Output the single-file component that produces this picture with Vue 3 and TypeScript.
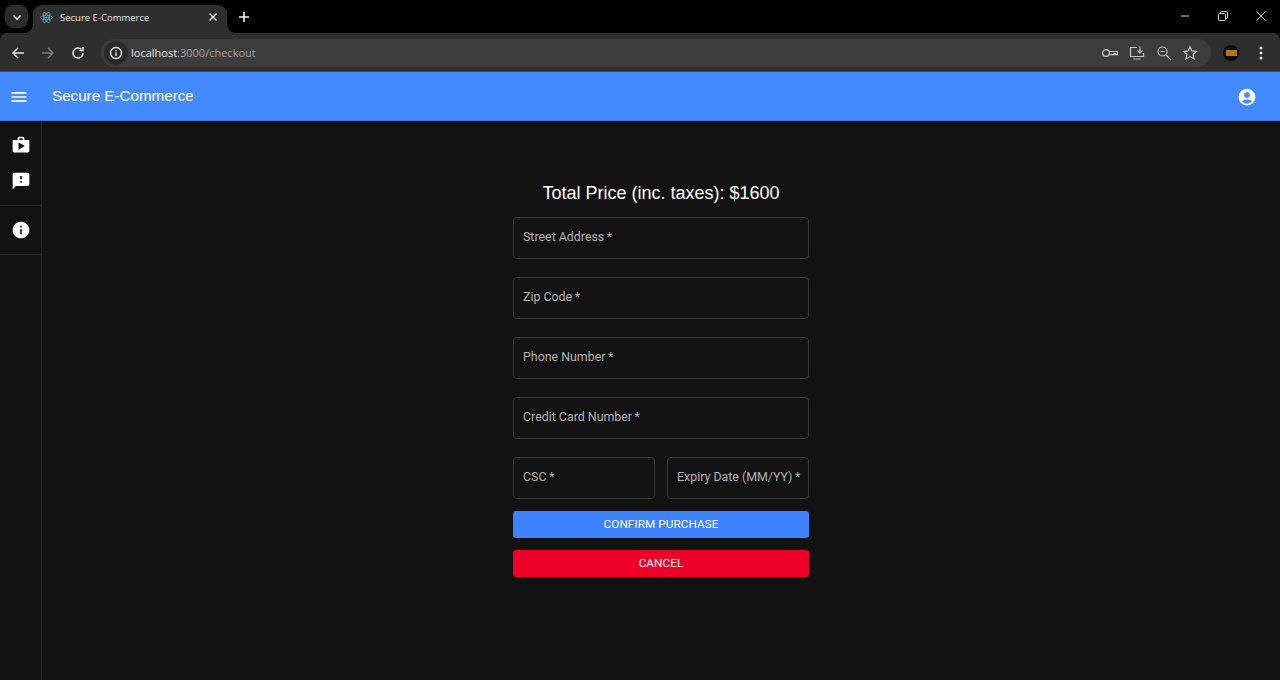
<script setup lang="ts">
const paths = {
  shop: 'M16 6V4c0-1.11-.89-2-2-2h-4c-1.11 0-2 .89-2 2v2H2v13c0 1.11.89 2 2 2h16c1.11 0 2-.89 2-2V6h-6zm-6-2h4v2h-4V4zM9 18V9l7.5 4L9 18z',
  feedback: 'M20 2H4c-1.1 0-1.99.9-1.99 2L2 22l4-4h14c1.1 0 2-.9 2-2V4c0-1.1-.9-2-2-2zm-7 12h-2v-2h2v2zm0-4h-2V6h2v4z',
  info: 'M12 2C6.48 2 2 6.48 2 12s4.48 10 10 10 10-4.48 10-10S17.52 2 12 2zm1 15h-2v-6h2v6zm0-8h-2V7h2v2z',
  account: 'M12 2C6.48 2 2 6.48 2 12s4.48 10 10 10 10-4.48 10-10S17.52 2 12 2zm0 4c1.93 0 3.5 1.57 3.5 3.5S13.93 13 12 13s-3.5-1.57-3.5-3.5S10.07 6 12 6zm0 14c-2.03 0-4.43-.82-6.14-2.88C7.55 15.8 9.68 15 12 15s4.45.8 6.14 2.12C16.43 19.18 14.03 20 12 20z',
  menu: 'M3 18h18v-2H3v2zm0-5h18v-2H3v2zm0-7v2h18V6H3z',
}
const fields: string[] = ['Street Address', 'Zip Code', 'Phone Number', 'Credit Card Number']
</script>

<template>
  <div class="page">
    <div class="tabstrip">
      <div class="tabsearch">
        <svg width="10" height="10" viewBox="0 0 10 10"><path d="M1.5 3.5 5 7l3.5-3.5" fill="none" stroke="#e8eaed" stroke-width="1.6" /></svg>
      </div>
      <div class="tab">
        <svg class="favicon" width="13" height="13" viewBox="-12 -12 24 24" fill="none" stroke="#58c4dc" stroke-width="1.2">
          <ellipse rx="10.5" ry="4.2" />
          <ellipse rx="10.5" ry="4.2" transform="rotate(60)" />
          <ellipse rx="10.5" ry="4.2" transform="rotate(120)" />
          <circle r="2" fill="#58c4dc" stroke="none" />
        </svg>
        <span class="tabtitle">Secure E-Commerce</span>
        <svg class="tabclose" width="10" height="10" viewBox="0 0 10 10"><path d="M1.5 1.5l7 7m0-7-7 7" stroke="#f1f3f4" stroke-width="1.4" /></svg>
      </div>
      <svg class="newtab" width="12" height="12" viewBox="0 0 12 12"><path d="M6 1v10M1 6h10" stroke="#f1f3f4" stroke-width="1.6" /></svg>
      <div class="winctrls">
        <svg width="12" height="12" viewBox="0 0 12 12"><path d="M2 6h8" stroke="#d5d5d5" stroke-width="1" /></svg>
        <svg width="12" height="12" viewBox="0 0 12 12" fill="none" stroke="#d5d5d5"><rect x="1.5" y="3.5" width="7" height="7" rx="1" /><path d="M3.5 3.5V2.5a1 1 0 0 1 1-1h5a1 1 0 0 1 1 1v5a1 1 0 0 1-1 1h-1" /></svg>
        <svg width="12" height="12" viewBox="0 0 12 12"><path d="M1.5 1.5l9 9m0-9-9 9" stroke="#d5d5d5" stroke-width="1" /></svg>
      </div>
    </div>

    <div class="toolbar">
      <svg class="tool" width="14" height="14" viewBox="0 0 14 14" fill="none" stroke="#e3e3e3" stroke-width="1.5"><path d="M13 7H2M7 2 2 7l5 5" /></svg>
      <svg class="tool" width="14" height="14" viewBox="0 0 14 14" fill="none" stroke="#7b7b7b" stroke-width="1.5"><path d="M1 7h11M7 2l5 5-5 5" /></svg>
      <svg class="tool" width="14" height="14" viewBox="0 0 14 14" fill="none" stroke="#e3e3e3" stroke-width="1.5"><path d="M12 7a5 5 0 1 1-1.6-3.7M12 1v3.5H8.5" /></svg>
      <div class="omnibox">
        <div class="siteinfo">
          <svg width="14" height="14" viewBox="0 0 14 14" fill="none" stroke="#e3e3e3" stroke-width="1.4"><circle cx="7" cy="7" r="5.5" /><path d="M7 6.2V10M7 4v1.3" /></svg>
        </div>
        <span class="url"><span class="host">localhost</span><span class="rest">:3000/checkout</span></span>
        <div class="omniicons">
          <svg class="keyicon" width="16" height="16" viewBox="0 0 16 16" fill="none" stroke="#c7c7c7" stroke-width="1.2"><circle cx="4" cy="8" r="3.4" /><path d="M7.4 6.5h8v3.2h-2V8.6h-1.4v1.1H7.4" /></svg>
          <svg width="16" height="16" viewBox="0 0 16 16" fill="none" stroke="#c7c7c7" stroke-width="1.2"><path d="M8 2.5H1.5v9h13V8M4.5 14h7M11 1.5v6M8.5 5.5 11 8l2.5-2.5" /></svg>
          <svg width="16" height="16" viewBox="0 0 16 16" fill="none" stroke="#c7c7c7" stroke-width="1.2"><circle cx="6.5" cy="6.5" r="4.5" /><path d="m10 10 5 5M4.5 6.5h4" /></svg>
          <svg width="16" height="16" viewBox="0 0 16 16" fill="none" stroke="#c7c7c7" stroke-width="1.2"><path d="m8 1.8 1.9 4.1 4.5.5-3.3 3 .9 4.5L8 11.6l-4 2.3.9-4.5-3.3-3 4.5-.5z" /></svg>
        </div>
      </div>
      <div class="avatar"><span class="avatarbar"></span></div>
      <svg class="kebab" width="4" height="14" viewBox="0 0 4 14" fill="#e3e3e3"><circle cx="2" cy="2" r="1.5" /><circle cx="2" cy="7" r="1.5" /><circle cx="2" cy="12" r="1.5" /></svg>
    </div>

    <header class="appbar">
      <svg class="menuicon" width="20" height="20" viewBox="0 0 24 24" fill="#fff"><path :d="paths.menu" /></svg>
      <h1 class="brand">Secure E-Commerce</h1>
      <svg width="20" height="20" viewBox="0 0 24 24" fill="#fff"><path :d="paths.account" /></svg>
    </header>

    <div class="body">
      <aside class="sidebar">
        <div class="navgroup">
          <div class="navitem"><svg width="20" height="20" viewBox="0 0 24 24" fill="#fff"><path :d="paths.shop" /></svg></div>
          <div class="navitem"><svg width="20" height="20" viewBox="0 0 24 24" fill="#fff"><path :d="paths.feedback" /></svg></div>
        </div>
        <div class="navgroup">
          <div class="navitem"><svg width="20" height="20" viewBox="0 0 24 24" fill="#fff"><path :d="paths.info" /></svg></div>
        </div>
      </aside>

      <main class="main">
        <form class="form" @submit.prevent>
          <h2 class="total">Total Price (inc. taxes): $1600</h2>
          <div v-for="f in fields" :key="f" class="field">{{ f }}&thinsp;*</div>
          <div class="split">
            <div class="field">CSC&thinsp;*</div>
            <div class="field">Expiry Date (MM/YY)&thinsp;*</div>
          </div>
          <button class="btn confirm" type="button">Confirm Purchase</button>
          <button class="btn cancel" type="button">Cancel</button>
        </form>
      </main>
    </div>
  </div>
</template>

<style scoped>
.page {
  width: 1280px;
  height: 680px;
  overflow: hidden;
  display: flex;
  flex-direction: column;
  background: #121212;
  font-family: "Liberation Sans", Arial, sans-serif;
}
.tabstrip {
  height: 33px;
  background: #000;
  display: flex;
  align-items: flex-start;
  padding-left: 5px;
  flex: none;
}
.tabsearch {
  width: 23px;
  height: 23px;
  margin-top: 5px;
  border-radius: 8px;
  background: #2b2b2b;
  display: flex;
  align-items: center;
  justify-content: center;
}
.tab {
  position: relative;
  z-index: 1;
  width: 194px;
  height: 28px;
  margin: 5px 0 0 5px;
  background: #2e2e2e;
  border-radius: 9px 9px 0 0;
  display: flex;
  align-items: center;
  padding: 0 9px 4px 7px;
  box-sizing: border-box;
}
.tab::before,
.tab::after {
  content: "";
  position: absolute;
  bottom: 0;
  width: 8px;
  height: 8px;
}
.tab::before {
  left: -8px;
  background: radial-gradient(circle at 0 0, transparent 7.5px, #2e2e2e 8px);
}
.tab::after {
  right: -8px;
  background: radial-gradient(circle at 100% 0, transparent 7.5px, #2e2e2e 8px);
}
.favicon { flex: none; }
.tabtitle {
  flex: 1;
  margin-left: 7px;
  font-size: 9.5px;
  color: #e3e3e3;
  font-family: "Open Sans", sans-serif;
  white-space: nowrap;
}
.newtab { margin: 11px 0 0 11px; }
.winctrls {
  margin-left: auto;
  display: flex;
  gap: 26px;
  padding: 10px 13px 0 0;
  justify-content: flex-end;
}
.toolbar {
  height: 39px;
  padding-top: 1px;
  box-sizing: border-box;
  background: #2e2e2e;
  border-radius: 8px 8px 0 0;
  display: flex;
  align-items: center;
  padding-left: 11px;
  border-bottom: 1px solid #4a4a4a;
  flex: none;
}
.tool { margin-right: 16px; flex: none; }
.omnibox {
  width: 1110px;
  height: 28px;
  border-radius: 14px;
  background: #3c3c3c;
  display: flex;
  align-items: center;
}
.siteinfo {
  width: 24px;
  height: 24px;
  margin-left: 3px;
  border-radius: 50%;
  background: #2a2a2a;
  display: flex;
  align-items: center;
  justify-content: center;
}
.url {
  margin-left: 3px;
  font-size: 11px;
  font-family: "Open Sans", sans-serif;
  white-space: nowrap;
}
.host { color: #e3e3e3; }
.rest { color: #a5a5a5; }
.omniicons {
  margin-left: auto;
  display: flex;
  gap: 10.5px;
  padding-right: 13px;
}
.keyicon { margin-left: -1px; margin-right: 1px; }
.avatar {
  width: 16px;
  height: 16px;
  margin-left: 12px;
  border-radius: 50%;
  background: #0b0b0b;
  display: flex;
  align-items: center;
  justify-content: center;
  flex: none;
}
.avatarbar {
  width: 11px;
  height: 6px;
  background: #b5750f;
}
.kebab { margin-left: 20px; }
.appbar {
  height: 49px;
  box-sizing: border-box;
  background: #448aff;
  display: flex;
  align-items: center;
  padding: 1px 23px 0 9px;
  border-bottom: 1px solid #3d78dc;
  flex: none;
}
.brand {
  flex: 1;
  margin: 0 0 2px 23px;
  font-size: 15.2px;
  font-weight: 400;
  color: #fff;
}
.body {
  flex: 1;
  display: flex;
  min-height: 0;
}
.sidebar {
  width: 42px;
  box-sizing: border-box;
  border-right: 1px solid #282828;
  flex: none;
}
.navgroup {
  padding: 6px 0;
  border-bottom: 1px solid #282828;
}
.navitem {
  height: 36px;
  display: flex;
  align-items: center;
  justify-content: center;
  padding-left: 1px;
}
.main {
  flex: 1;
  display: flex;
  justify-content: center;
}
.form {
  width: 296px;
  padding-top: 60px;
  display: flex;
  flex-direction: column;
}
.total {
  margin: 0 -20px 12px;
  font-size: 18px;
  line-height: 24px;
  font-weight: 400;
  color: #fff;
  text-align: center;
}
.field {
  height: 42px;
  box-sizing: border-box;
  border: 1px solid #383838;
  border-radius: 4px;
  padding: 11px 9px 0;
  font-size: 12.4px;
  line-height: 15px;
  color: #b3b3b3;
  font-family: Roboto, sans-serif;
  margin-bottom: 18px;
  white-space: nowrap;
  flex: none;
}
.split {
  display: grid;
  grid-template-columns: minmax(0, 1fr) minmax(0, 1fr);
  gap: 12px;
}
.split .field { margin-bottom: 12px; }
.btn {
  height: 27px;
  border: none;
  border-radius: 3px;
  color: #fff;
  font-family: Roboto, sans-serif;
  font-size: 11.7px;
  text-transform: uppercase;
  letter-spacing: 0.1px;
  padding: 0 0 2px;
  flex: none;
}
.confirm { background: #3d82ff; margin-bottom: 12px; }
.cancel { background: #ec0028; }
</style>
